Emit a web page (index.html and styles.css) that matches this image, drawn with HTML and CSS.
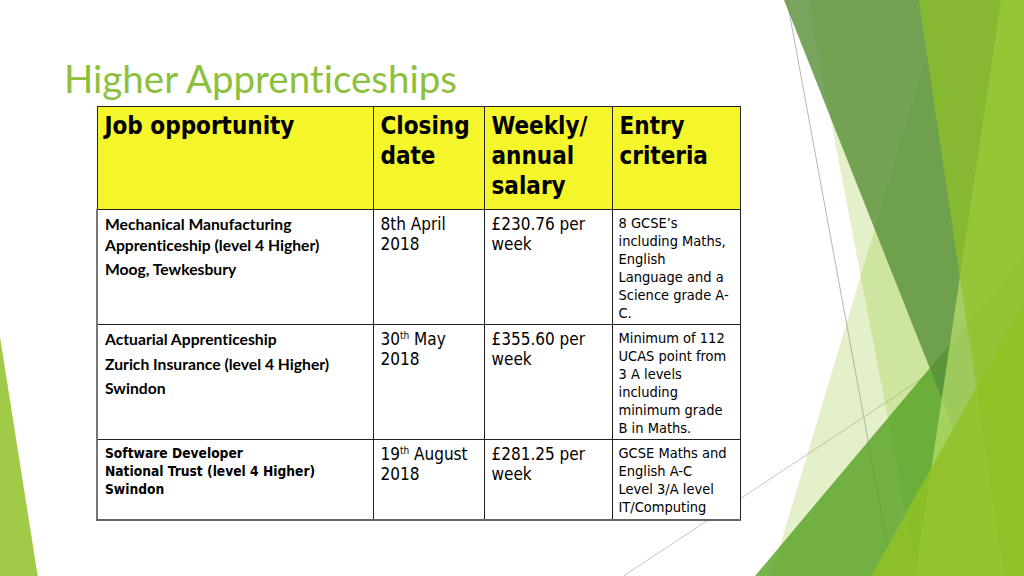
FILE: index.html
```html
<!DOCTYPE html>
<html>
<head>
<meta charset="utf-8">
<link rel="stylesheet" href="styles.css">
</head>
<body>
<div class="slide">
  <svg class="bg" viewBox="0 0 1024 576" xmlns="http://www.w3.org/2000/svg">
    <line x1="787" y1="0" x2="893" y2="576" stroke="#b8b8b8" stroke-width="1"/>
    <line x1="623.6" y1="576" x2="1024" y2="311" stroke="#c4c4c4" stroke-width="1"/>
    <polygon points="942.9,0 1024,0 1024,576 771.1,576" fill="#90c226" fill-opacity="0.25"/>
    <polygon points="808,0 1024,0 1024,576 918,576" fill="#90c226" fill-opacity="0.25"/>
    <polygon points="755,576 1024,256 1024,576" fill="#54a021" fill-opacity="0.8"/>
    <polygon points="784,0 1024,0 1024,576 1012,576" fill="#5a903a" fill-opacity="0.82"/>
    <polygon points="1001,0 1024,0 1024,576 915.4,576" fill="#bae16c" fill-opacity="0.7"/>
    <polygon points="918.8,0 1024,0 1024,576 1004.3,576" fill="#90c226" fill-opacity="0.7"/>
    <polygon points="871.1,576 1024,301.5 1024,576" fill="#90c226" fill-opacity="0.85"/>
    <polygon points="0,337 0,576 37.7,576" fill="#90c226" fill-opacity="0.85"/>
  </svg>
  <div class="content">
    <h1 class="title">Higher Apprenticeships</h1>
    <table class="jobs">
      <colgroup>
        <col class="col-job">
        <col class="col-date">
        <col class="col-pay">
        <col class="col-crit">
      </colgroup>
      <thead>
        <tr class="row-head">
          <th class="head">Job opportunity</th>
          <th class="head">Closing<br>date</th>
          <th class="head">Weekly/<br>annual<br>salary</th>
          <th class="head">Entry<br>criteria</th>
        </tr>
      </thead>
      <tbody>
        <tr class="row-a">
          <td class="job first"><p class="para">Mechanical Manufacturing<br>Apprenticeship (level 4 Higher)</p><p class="para">Moog, Tewkesbury</p></td>
          <td class="val">8th April<br>2018</td>
          <td class="val">£230.76 per<br>week</td>
          <td class="crit">8 GCSE’s<br>including Maths,<br>English<br>Language and a<br>Science grade A-<br>C.</td>
        </tr>
        <tr class="row-b">
          <td class="job first"><p class="para">Actuarial Apprenticeship</p><p class="para">Zurich Insurance (level 4 Higher)</p><p class="para">Swindon</p></td>
          <td class="val">30<sup class="ord">th</sup> May<br>2018</td>
          <td class="val">£355.60 per<br>week</td>
          <td class="crit">Minimum of 112<br>UCAS point from<br>3 A levels<br>including<br>minimum grade<br>B in Maths.</td>
        </tr>
        <tr class="row-c">
          <td class="job2 first">Software Developer<br>National Trust (level 4 Higher)<br>Swindon</td>
          <td class="val">19<sup class="ord">th</sup> August<br>2018</td>
          <td class="val">£281.25 per<br>week</td>
          <td class="crit">GCSE Maths and<br>English A-C<br>Level 3/A level<br>IT/Computing</td>
        </tr>
      </tbody>
    </table>
  </div>
</div>
</body>
</html>
```

FILE: styles.css
```css
* { box-sizing: border-box; }
html, body { margin: 0; padding: 0; background: #ffffff; }
.slide {
  position: relative;
  width: 1024px;
  height: 576px;
  overflow: hidden;
  background: #ffffff;
  font-family: "DejaVu Sans Condensed", "DejaVu Sans", sans-serif;
  color: #000;
  font-variant-ligatures: none;
}
.bg { position: absolute; left: 0; top: 0; width: 1024px; height: 576px; }
.content { position: relative; z-index: 1; padding: 55px 0 0 64px; }
.title {
  margin: 0 0 5px 0;
  font-family: Lato, "Open Sans", sans-serif;
  font-weight: 400;
  font-size: 38.5px;
  line-height: 46px;
  height: 46px;
  color: #8dc03c;
  white-space: nowrap;
  font-variant-ligatures: none;
}
.jobs {
  margin-left: 32px;
  border-collapse: collapse;
  table-layout: fixed;
  width: 643px;
}
.col-job { width: 276px; }
.col-date { width: 111px; }
.col-pay { width: 128px; }
.col-crit { width: 128px; }
.row-head { height: 103px; }
.row-a { height: 115px; }
.row-b { height: 115px; }
.row-c { height: 80px; }
.head {
  background: #f5f52c;
  border: 1px solid #222;
  font-weight: bold;
  font-size: 24px;
  line-height: 30px;
  text-align: left;
  vertical-align: top;
  padding: 4px 7px 0 7px;
}
.jobs td {
  border: 1px solid #222;
  vertical-align: top;
  background: #ffffff;
  white-space: nowrap;
}
.jobs td.first { border-left: 2px solid #777; }
.row-c td { border-bottom: 2px solid #666; }
.job {
  font-family: Lato, "Open Sans", sans-serif;
  font-weight: bold;
  font-size: 15.7px;
  line-height: 20.5px;
  padding: 4px 7px 0 7px;
  font-variant-ligatures: none;
}
.para { margin: 0 0 4px 0; }
.job2 {
  font-weight: bold;
  font-size: 13.7px;
  line-height: 18px;
  padding: 4px 7px 0 7px;
}
.val {
  font-size: 17px;
  line-height: 20px;
  padding: 4px 7px 0 7px;
}
.crit {
  font-size: 14.5px;
  line-height: 18px;
  padding: 4px 6px 0 6px;
}
.ord { font-size: 10px; line-height: 0; vertical-align: 6px; }
```
